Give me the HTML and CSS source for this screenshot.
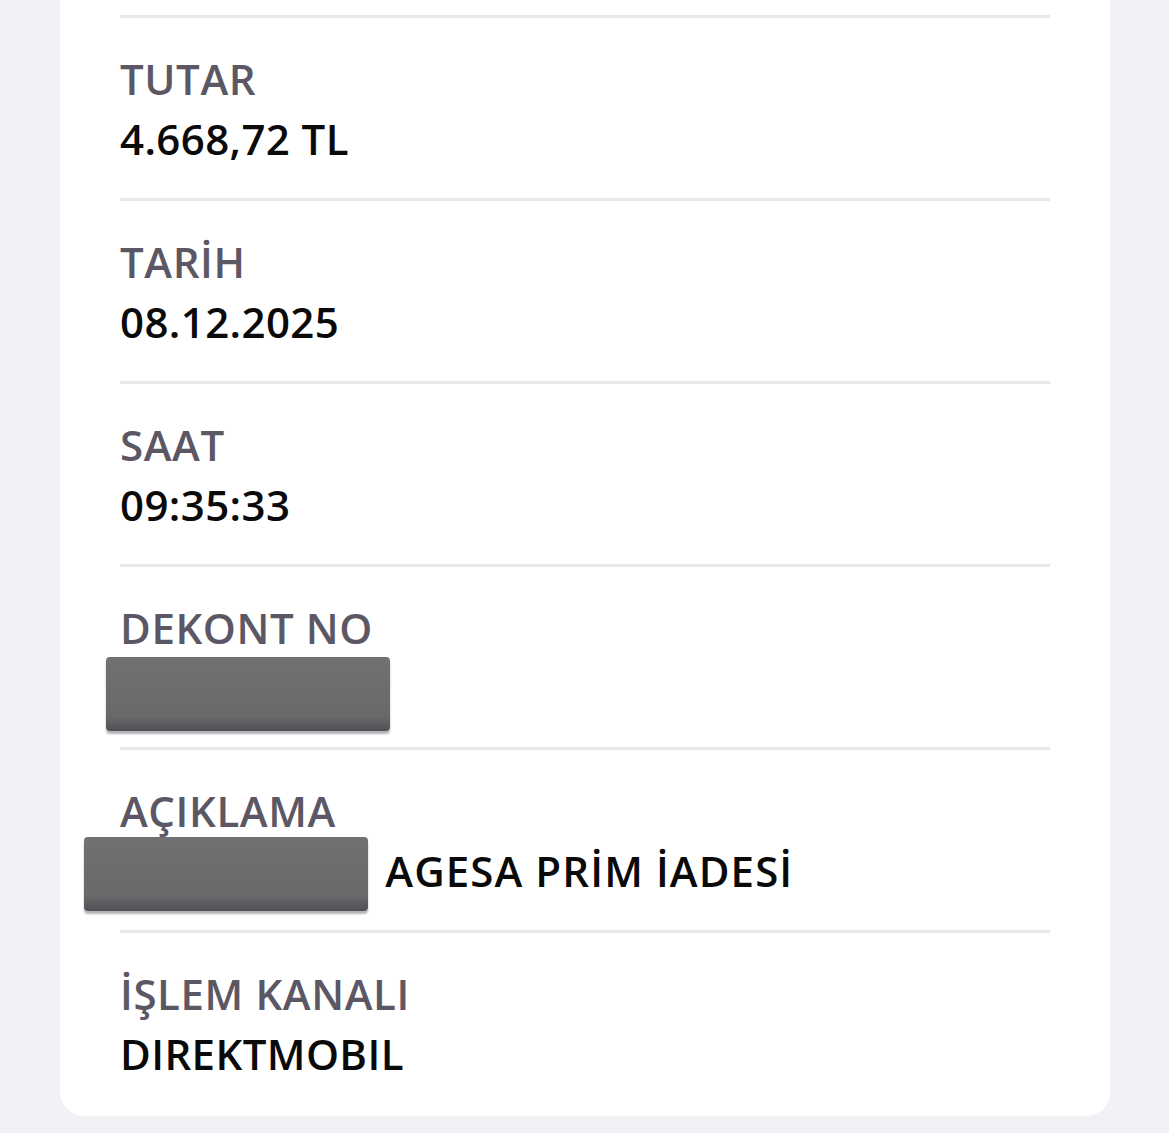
FILE: index.html
```html
<!DOCTYPE html>
<html lang="tr">
<head>
  <meta charset="UTF-8"/>
  <meta name="viewport" content="width=device-width, initial-scale=1.0"/>
  <title>Dekont Detayı</title>
  <link rel="stylesheet" href="styles.css">
</head>
<body>
  <div class="card">
    <div class="row">
      <div class="label">TUTAR</div>
      <div class="value">4.668,72 TL</div>
    </div>
    <div class="row">
      <div class="label">TARİH</div>
      <div class="value">08.12.2025</div>
    </div>
    <div class="row">
      <div class="label">SAAT</div>
      <div class="value">09:35:33</div>
    </div>
    <div class="row">
      <div class="label">DEKONT NO</div>
      <div class="value">0000000000</div>
      <div class="redact redact-no"></div>
    </div>
    <div class="row">
      <div class="label">AÇIKLAMA</div>
      <div class="value"><span class="hidden-part">0000000000</span> <span class="caps">AGESA PRİM İADESİ</span></div>
      <div class="redact redact-desc"></div>
    </div>
    <div class="row">
      <div class="label">İŞLEM KANALI</div>
      <div class="value">DIREKTMOBIL</div>
    </div>
  </div>
</body>
</html>
```

FILE: styles.css
```css
body { margin:0; padding:0; background:#f2f2f6; font-family:"Open Sans", "Liberation Sans", sans-serif; }
.card { margin:0 59px 18px 60px; background:#fff; border-radius:0 0 24px 24px; padding:15px 60px 3px; }
.row { position:relative; border-top:3px solid #e8e8ec; padding:31px 0 29px; }
.label { font-size:42px; line-height:60px; font-weight:600; color:#5b5764; letter-spacing:0.6px; }
.value { font-size:42px; line-height:60px; font-weight:600; color:#0a0a0a; white-space:nowrap; letter-spacing:0.4px; }
.caps { letter-spacing:1.1px; }
.hidden-part { display:inline-block; width:254px; overflow:hidden; vertical-align:top; }
.redact { position:absolute; width:284px; height:74px; border-radius:4px;
  background:linear-gradient(#717173, #69696c 80%, #505054);
  box-shadow:0 3px 2px rgba(40,40,60,0.35); }
.redact-no { left:-14px; top:90px; }
.redact-desc { left:-36px; top:87px; }
```
